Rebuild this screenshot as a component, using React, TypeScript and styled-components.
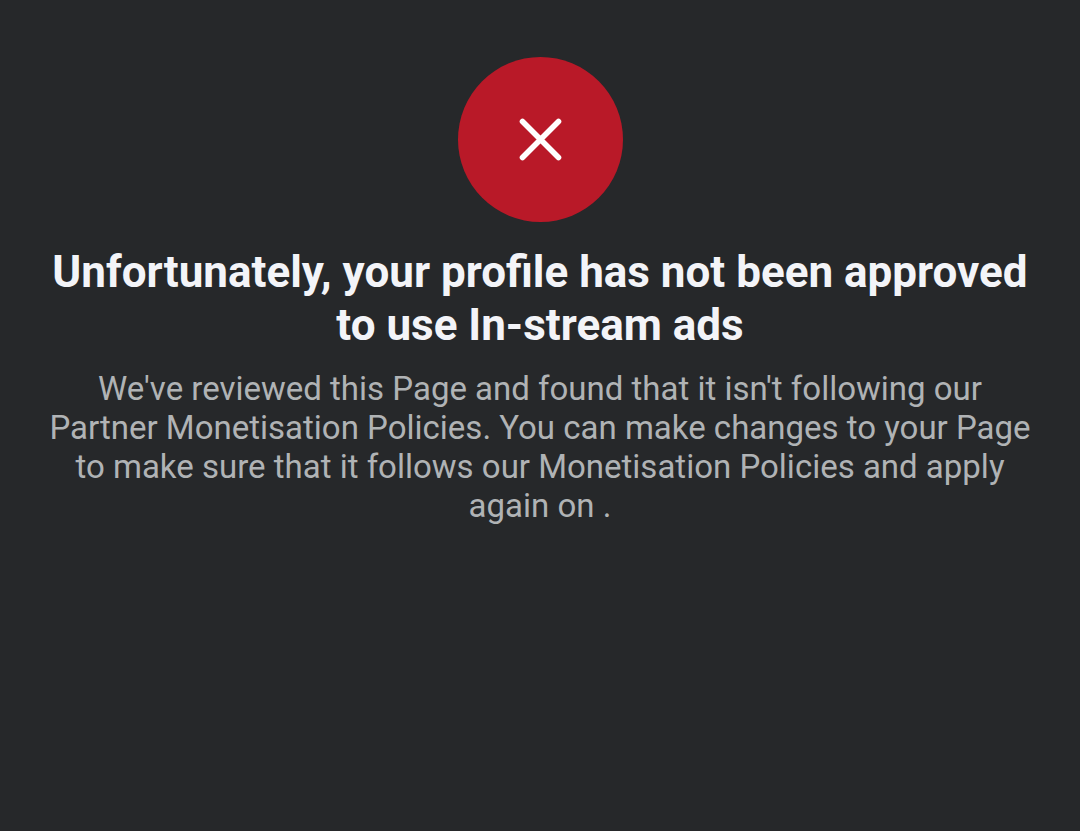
import React from "react";
import styled, { createGlobalStyle } from "styled-components";

const GlobalStyle = createGlobalStyle`
  body {
    margin: 0;
    background: #26282a;
    font-family: Roboto, "Liberation Sans", sans-serif;
  }
`;

const Notice = styled.main`
  box-sizing: border-box;
  min-height: 100vh;
  padding: 57px 44px 44px;
  display: flex;
  flex-direction: column;
  align-items: center;
  text-align: center;
`;

const StatusBadge = styled.div`
  display: grid;
  place-items: center;
  width: 165px;
  height: 165px;
  border-radius: 50%;
  background: #b91928;
`;

const Title = styled.h1`
  margin: 24px 0 0;
  color: #f3f4f8;
  font-size: 44px;
  font-weight: 700;
  line-height: 53px;
`;

const Message = styled.p`
  margin: 17px 0 0;
  color: #b0b3b5;
  font-size: 33px;
  font-weight: 400;
  line-height: 39px;
`;

export default function App() {
  return (
    <>
      <GlobalStyle />
      <Notice>
        <StatusBadge role="img" aria-label="Not approved">
          <svg width="45" height="45" viewBox="0 0 45 45" fill="none">
            <path
              d="M4.5 4.5L40.5 40.5M40.5 4.5L4.5 40.5"
              stroke="#fff"
              strokeWidth="5.6"
              strokeLinecap="round"
            />
          </svg>
        </StatusBadge>
        <Title>
          Unfortunately, your profile has not been approved to use In-stream ads
        </Title>
        <Message>
          We've reviewed this Page and found that it isn't following our Partner
          Monetisation Policies. You can make changes to your Page to make sure
          that it follows our Monetisation Policies and apply again on .
        </Message>
      </Notice>
    </>
  );
}
